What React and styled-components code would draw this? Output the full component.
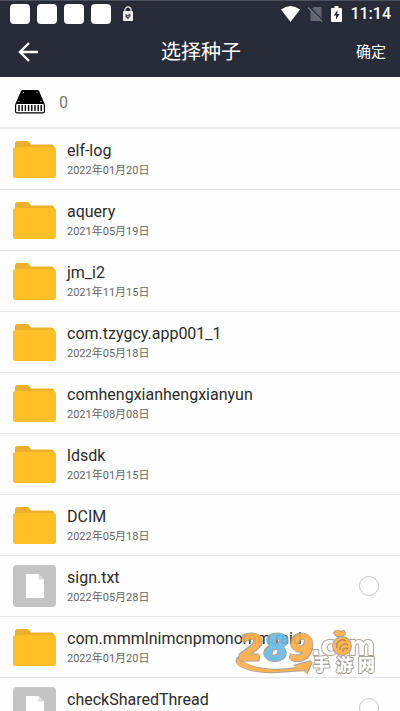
import React, { useState } from "react";
import styled, { createGlobalStyle } from "styled-components";

const GlobalStyle = createGlobalStyle`
  * {
    box-sizing: border-box;
  }

  body {
    margin: 0;
    background: #fefefe;
    font-family: Roboto, "Noto Sans CJK SC", sans-serif;
  }
`;

const Screen = styled.div`
  position: relative;
  height: 100vh;
  display: flex;
  flex-direction: column;
  overflow: hidden;
`;

const StatusBar = styled.div`
  flex: none;
  height: 27px;
  padding: 0 9px 0 10px;
  border-top: 1px solid #4a505e;
  display: flex;
  align-items: center;
  justify-content: space-between;
  background: #282c39;
  color: #fff;
`;

const StatusGroup = styled.div`
  display: flex;
  align-items: center;
  gap: ${(props) => props.$gap}px;
`;

const AppBadge = styled.span`
  width: 20px;
  height: 20px;
  border-radius: 4px;
  background: #fff;
`;

const Clock = styled.span`
  font-size: 16px;
  font-weight: 500;
  line-height: 20px;
`;

const Header = styled.header`
  flex: none;
  height: 50px;
  padding: 0 14px 0 16px;
  display: grid;
  grid-template-columns: 1fr auto 1fr;
  align-items: center;
  background: #282c39;
  color: #fff;
`;

const BackButton = styled.button`
  justify-self: start;
  display: flex;
  padding: 0;
  border: none;
  background: none;
  color: inherit;
  cursor: pointer;
`;

const Title = styled.h1`
  margin: 0;
  font-size: 20px;
  font-weight: 400;
  line-height: 28px;
`;

const ConfirmButton = styled.button`
  justify-self: end;
  padding: 0;
  border: none;
  background: none;
  color: inherit;
  font-family: inherit;
  font-size: 15px;
  line-height: 24px;
  cursor: pointer;
`;

const Storage = styled.div`
  flex: none;
  height: 52px;
  padding: 0 15px;
  border-bottom: 2px solid #e9e9e9;
  display: flex;
  align-items: center;
  gap: 14px;
  color: #777;
  font-size: 16px;
`;

const List = styled.ul`
  flex: 1;
  min-height: 0;
  margin: 0;
  padding: 0;
  list-style: none;
  overflow-y: auto;
  scrollbar-width: none;
`;

const Item = styled.li`
  border-bottom: 1px solid #e6e6e6;
`;

const Row = styled.div`
  width: 100%;
  height: 60px;
  padding: 0 21px 0 13px;
  border: none;
  display: flex;
  align-items: center;
  gap: 11px;
  background: none;
  font-family: inherit;
  text-align: left;
  cursor: pointer;
`;

const Info = styled.span`
  flex: 1;
  min-width: 0;
  display: flex;
  flex-direction: column;
`;

const Name = styled.span`
  color: #2b2b2b;
  font-size: 16px;
  line-height: 24px;
  white-space: nowrap;
`;

const DateText = styled.span`
  color: #666;
  font-size: 11px;
  line-height: 16px;
`;

const Radio = styled.input`
  appearance: none;
  width: 20px;
  height: 20px;
  margin: 0;
  border: 1px solid #c8c8c8;
  border-radius: 50%;
  background: #fff;

  &:checked {
    border: 6px solid #282c39;
  }
`;

const Watermark = styled.svg`
  position: absolute;
  right: 20px;
  bottom: 35px;
  pointer-events: none;
  opacity: 0.9;
`;

const Outlined = styled.g`
  filter: drop-shadow(1px 1px 0 #a39a90) drop-shadow(-1px -1px 0 #a39a90);
`;

const FolderIcon = () => (
  <svg width="43" height="42" viewBox="0 0 43 42" aria-hidden="true">
    <path
      d="M2 14V5.500Q2 3 4.500 3H14q1.500 0 2.300 1.300L18 6.500h20.500Q41 6.500 41 9v5z"
      fill="#edb02b"
    />
    <path d="M2 9.500h39" stroke="#dda32a" />
    <rect y="9" width="43" height="31" rx="2.500" fill="#ffc027" />
  </svg>
);

const FileIcon = () => (
  <svg width="43" height="42" viewBox="0 0 43 42" aria-hidden="true">
    <rect width="43" height="42" rx="4" fill="#c4c4c4" />
    <path d="M13 9h12.500l5.500 5.500V33H13z" fill="#fff" />
    <path d="M25.500 9v5.500H31z" fill="#dedede" />
  </svg>
);

const ArrowIcon = () => (
  <svg width="24" height="24" viewBox="0 0 24 24" aria-hidden="true">
    <path
      d="M22 12H4M13 3l-9 9 9 9"
      fill="none"
      stroke="#fff"
      strokeWidth="2.400"
    />
  </svg>
);

const LockIcon = () => (
  <svg width="16" height="16" viewBox="-4 0 16 16" aria-hidden="true">
    <path d="M3 6V4a3 3 0 0 1 6 0v2" fill="none" stroke="#ddd" strokeWidth="1.300" />
    <rect x="1" y="5" width="10" height="10" rx="1" fill="#eee" />
    <path d="M3.500 8l2 1 3-1.500v3L6 13.200 3.500 11z" fill="#414451" />
    <path d="M5 10l1.500 1L8 9.500" fill="none" stroke="#eee" strokeWidth=".700" />
  </svg>
);

const WifiIcon = () => (
  <svg width="19" height="16" viewBox="0 0 19 16" aria-hidden="true">
    <path d="M0 3.500Q9.500-3.500 19 3.500L9.500 16z" fill="#fff" />
  </svg>
);

const NoSimIcon = () => (
  <svg width="15" height="16" viewBox="0 0 15 16" aria-hidden="true">
    <path d="M6 1h6.500q1 0 1 1v13H2.500V4.500z" fill="#646772" />
    <path d="M1 1.500l14 14" stroke="#282c39" strokeWidth="2.500" />
    <path d="M0 1.500l14 14" stroke="#7b7e87" strokeWidth="1.200" />
  </svg>
);

const BatteryIcon = () => (
  <svg width="11" height="18" viewBox="0 0 11 18" aria-hidden="true">
    <path d="M3.500 1h4v2H10q1 0 1 1v12q0 1-1 1H1q-1 0-1-1V4q0-1 1-1h2.500z" fill="#fff" />
    <path d="M6.500 5L2.700 10.500H5v4L8.500 9H6.300z" fill="#282c39" />
  </svg>
);

const DriveIcon = () => (
  <svg width="30" height="24" viewBox="0 0 30 24" aria-hidden="true">
    <path d="M7.500 0h15q1 0 1.500 1l5.500 12.500H.500L6 1q.500-1 1.500-1z" fill="#000" />
    <rect x=".600" y="13.500" width="28.800" height="9.400" rx="1.500" fill="#fff" stroke="#000" strokeWidth="1.200" />
    <path
      d="M4 15v6M7.200 15v6M10.400 15v6M13.600 15v6M16.800 15v6M20 15v6M23.200 15v6M26.200 15v6"
      stroke="#000"
      strokeWidth="1.400"
    />
    <path d="M8 2.500h.800M21.500 2.500h.800M3.500 11.500h.800M25.700 11.500h.800" stroke="#fff" />
  </svg>
);

const SiteMark = () => (
  <Watermark width="146" height="46" viewBox="0 -4 146 46" aria-label="289.com 手游网">
    <Outlined>
      <path
        d="M4 24q-3 4 0 7 15 10 53 6l14-1 1 4 6-13-18 5 4 2q-31 5-51-4-6-3-6-6z"
        fill="#fcad42"
      />
    </Outlined>
    <Outlined
      fontFamily="DejaVu Sans, sans-serif"
      fontSize="35"
      fontStyle="italic"
      fontWeight="700"
      strokeWidth="1"
    >
      <text x="5" y="26" fill="#fcad42" stroke="#fcad42">2</text>
      <text x="55" y="26" fill="#fcad42" stroke="#fcad42">9</text>
      <text x="30" y="26" fill="#66b9e5" stroke="#66b9e5">8</text>
    </Outlined>
    <g
      fontFamily="DejaVu Sans, sans-serif"
      fontSize="26"
      fontWeight="700"
      fill="#fff"
      stroke="#a39a90"
      strokeWidth="2"
      strokeLinejoin="round"
      paintOrder="stroke"
    >
      <text x="77" y="21">.c</text>
      <text x="114" y="21">m</text>
      <path d="M103 2l-3-3 3-4 3 3 4-1 1 3-3 2z" fill="#fcad42" />
      <circle cx="108" cy="12" r="9" fill="#fcad42" />
    </g>
    <g
      fontFamily="Noto Sans CJK SC, sans-serif"
      fontSize="17"
      fontWeight="900"
      fill="#fff"
      stroke="#a39a90"
      strokeWidth="2"
      strokeLinejoin="round"
      paintOrder="stroke"
    >
      <text x="79" y="37">手</text>
      <text x="102" y="37">游</text>
      <text x="124" y="37">网</text>
    </g>
    <path
      d="M103 14a6 6 0 0 1 9-7M106 16a5 5 0 0 1 8-5M109 18a3 3 0 0 1 5-3"
      fill="none"
      stroke="#a9793e"
      strokeWidth="1.200"
    />
  </Watermark>
);

const entries = [
  { name: "elf-log", date: "2022年01月20日" },
  { name: "aquery", date: "2021年05月19日" },
  { name: "jm_i2", date: "2021年11月15日" },
  { name: "com.tzygcy.app001_1", date: "2022年05月18日" },
  { name: "comhengxianhengxianyun", date: "2021年08月08日" },
  { name: "ldsdk", date: "2021年01月15日" },
  { name: "DCIM", date: "2022年05月18日" },
  { name: "sign.txt", date: "2022年05月28日", file: true },
  { name: "com.mmmlnimcnpmonomm.raid", date: "2022年01月20日" },
  { name: "checkSharedThread", date: "2022年05月28日", file: true },
];

const Entry = ({ entry, checked, onSelect }) => (
  <Item>
    <Row as={entry.file ? "label" : "button"}>
      {entry.file ? <FileIcon /> : <FolderIcon />}
      <Info>
        <Name>{entry.name}</Name>
        <DateText>{entry.date}</DateText>
      </Info>
      {entry.file && (
        <Radio
          type="radio"
          name="seed"
          checked={checked}
          onChange={() => onSelect(entry.name)}
        />
      )}
    </Row>
  </Item>
);

const App = () => {
  const [selected, setSelected] = useState(null);

  return (
    <Screen>
      <GlobalStyle />
      <StatusBar>
        <StatusGroup $gap={7}>
          <AppBadge />
          <AppBadge />
          <AppBadge />
          <AppBadge />
          <LockIcon />
        </StatusGroup>
        <StatusGroup $gap={8}>
          <WifiIcon />
          <NoSimIcon />
          <BatteryIcon />
          <Clock>11:14</Clock>
        </StatusGroup>
      </StatusBar>
      <Header>
        <BackButton aria-label="返回">
          <ArrowIcon />
        </BackButton>
        <Title>选择种子</Title>
        <ConfirmButton>确定</ConfirmButton>
      </Header>
      {/* 存储位置 */}
      <Storage>
        <DriveIcon />
        <span>0</span>
      </Storage>
      <List>
        {entries.map((entry) => (
          <Entry
            key={entry.name}
            entry={entry}
            checked={selected === entry.name}
            onSelect={setSelected}
          />
        ))}
      </List>
      <SiteMark />
    </Screen>
  );
};

export default App;
